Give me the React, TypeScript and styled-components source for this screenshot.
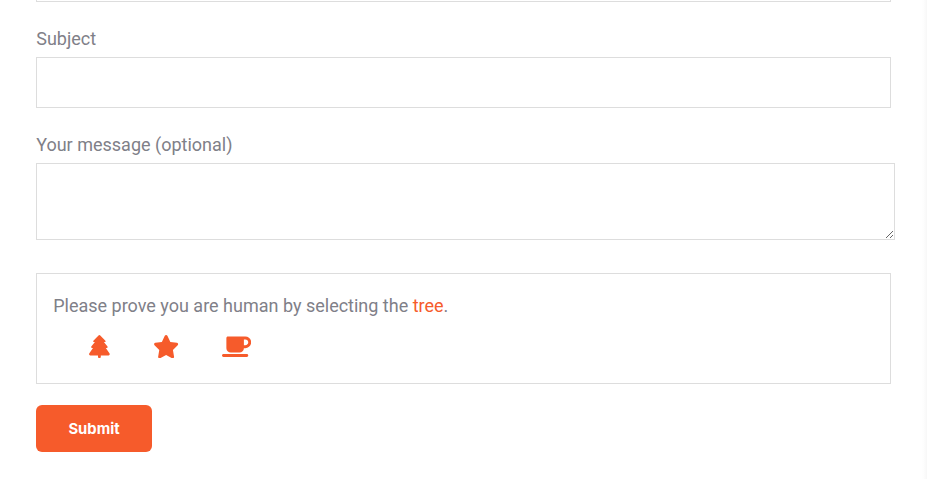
import React from "react";
import styled, { createGlobalStyle } from "styled-components";
import { FaStar, FaMugSaucer } from "react-icons/fa6";

const GlobalStyle = createGlobalStyle`
  *, *::before, *::after { box-sizing: border-box; }
  body {
    margin: 0;
    background: #fff;
    color: #7f8088;
    font-family: Roboto, sans-serif;
    font-size: 18px;
    overflow: hidden;
  }
`;

const Card = styled.form`
  height: 479px;
  padding: 0 36px;
  background: linear-gradient(to left, #f7f7f7, #fbfbfb 2px, #fefefe 4px, #fff 6px);
  display: flex;
  flex-direction: column;
  align-items: flex-start;
`;

const PreviousField = styled.div`
  width: 100%;
  height: 2px;
  flex: none;
  border: 1px solid #ddd;
  border-top: 0;
`;

const Field = styled.label`
  display: flex;
  flex-direction: column;
  width: 100%;
  margin-top: 24px;
`;

const Label = styled.span`
  line-height: 26px;
  margin-bottom: 5px;
  padding-left: 0.2px;
`;

const Input = styled.input`
  width: 100%;
  height: 51px;
  border: 1px solid #ddd;
  background: #fff;
  outline: none;
`;

const Message = styled.textarea`
  width: 859px;
  height: 77px;
  border: 1px solid #ddd;
  background: #fff;
  outline: none;
  resize: vertical;
`;

const Captcha = styled.div`
  width: 100%;
  height: 111px;
  margin-top: 33px;
  border: 1px solid #ddd;
  padding: 19px 16px;
`;

const Prompt = styled.div`
  line-height: 26px;
  padding-left: 0.2px;
`;

const Target = styled.span`
  color: #f65b2b;
`;

const Choices = styled.div`
  display: flex;
  align-items: flex-start;
  gap: 42.7px;
  height: 26px;
  margin-top: 16px;
  padding-left: 36px;
  color: #f65b2b;
`;

const Choice = styled.span<{ $width: number }>`
  display: block;
  flex: none;
  width: ${(p) => p.$width}px;
  height: 23.4px;

  svg {
    display: block;
    width: 100%;
    height: 100%;
  }
`;

const Submit = styled.button`
  width: 116px;
  height: 47px;
  margin-top: 21px;
  border: 0;
  border-radius: 6px;
  background: #f65b2b;
  color: #fff;
  font: 700 14.8px/20px Inter, sans-serif;
  padding: 0;
`;

const TreeIcon = () => (
  <svg viewBox="0 0.7 21.2 23.4" fill="currentColor" aria-hidden="true">
    <path d="M10.4 .8Q10.9 .8 11.3 1.2L16.4 6.5Q17 7.6 15.7 7.8H14.9L18.5 12.3Q19 13.5 17.7 13.7H16.8L20.6 19.2Q21.1 21 19.6 21.1H11.8V22.7Q11.6 23.8 10.4 23.8Q9.2 23.8 9 22.7V21.1H1.2Q-.3 21 .2 19.2L4 13.7H3.1Q1.8 13.5 2.3 12.3L5.9 7.8H5.1Q3.8 7.6 4.4 6.5L9.5 1.2Q9.9 .8 10.4 .8Z" />
  </svg>
);

export default function App() {
  return (
    <>
      <GlobalStyle />
      <Card>
        <PreviousField />
        <Field>
          <Label>Subject</Label>
          <Input />
        </Field>
        <Field>
          <Label>Your message (optional)</Label>
          <Message />
        </Field>
        <Captcha>
          <Prompt>
            Please prove you are human by selecting the <Target>tree</Target>.
          </Prompt>
          <Choices>
            <Choice $width={21.2}><TreeIcon /></Choice>
            <Choice $width={26.2}><FaStar /></Choice>
            <Choice $width={29.2}><FaMugSaucer /></Choice>
          </Choices>
        </Captcha>
        <Submit type="button">Submit</Submit>
      </Card>
    </>
  );
}
